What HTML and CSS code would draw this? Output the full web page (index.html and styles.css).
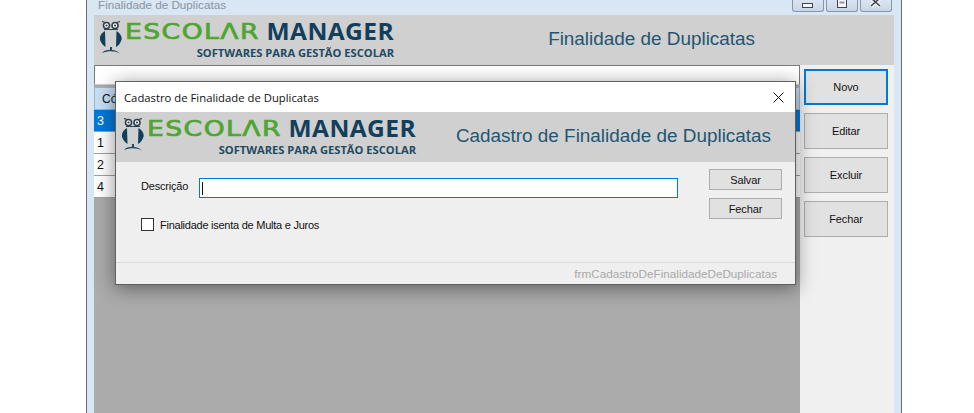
FILE: index.html
```html
<!DOCTYPE html>
<html lang="pt">
<head>
<meta charset="utf-8">
<title>Finalidade de Duplicatas</title>
<link rel="stylesheet" href="styles.css">
</head>
<body>
<div class="window">
  <div class="titlebar">
    <span class="window-title">Finalidade de Duplicatas</span>
    <div class="controls">
      <span class="ctl"><svg width="32" height="12" viewBox="0 0 32 12"><rect x="10.5" y="3.5" width="10" height="4" fill="#f4f6f9" stroke="#3c4654"/></svg></span>
      <span class="ctl"><svg width="32" height="12" viewBox="0 0 32 12"><rect x="11.5" y="-2.5" width="9" height="10" fill="#f4f6f9" stroke="#3c4654"/><rect x="13.5" y="1.5" width="5" height="2" fill="#8d98a8"/></svg></span>
      <span class="ctl"><svg width="32" height="12" viewBox="0 0 32 12"><path d="M11 -2 L20 6 M20 -2 L11 6" stroke="#f4f6f9" stroke-width="4"/><path d="M11 -2 L20 6 M20 -2 L11 6" stroke="#3c4654" stroke-width="1.6"/></svg></span>
    </div>
  </div>
  <div class="client">
    <header class="band">
      <div class="logo">
        <svg class="owl" width="22" height="34" viewBox="0 0 22 34">
          <circle cx="6.5" cy="4.5" r="3" fill="#fff" stroke="#2b3f4c" stroke-width="1.6"/>
          <circle cx="15" cy="4.5" r="3" fill="#fff" stroke="#2b3f4c" stroke-width="1.6"/>
          <circle cx="6.5" cy="4.5" r="1.1" fill="#2b3f4c"/>
          <circle cx="15" cy="4.5" r="1.1" fill="#2b3f4c"/>
          <path d="M2 .5 L5 1.5 M20 .5 L17 1.5 M4 8.5 H18" stroke="#2b3f4c" stroke-width="1.2"/>
          <path d="M5 10 C1 12 -1.5 17 0.5 20 C1.5 23 4 25 5.5 26 Z" fill="#103f5c"/>
          <path d="M16.5 10 C20.5 12 23 17 21 20 C20 23 18 25 16 26 Z" fill="#103f5c"/>
          <path d="M2 32 C5 27.5 16 27.5 20 32.5 C15 29.5 8 29.5 2 32 Z" fill="#1d4a63"/>
          <path d="M10 26 H12 V29 H10 Z" fill="#1d4a63"/>
        </svg>
        <div class="wordmark">
          <div class="brand"><span class="brand-green">ESCOLΛR</span><span class="brand-blue">MANAGER</span></div>
          <div class="tagline">SOFTWARES PARA GESTÃO ESCOLAR</div>
        </div>
      </div>
      <h1 class="band-title main-title">Finalidade de Duplicatas</h1>
    </header>
    <div class="content">
      <div class="left">
        <div class="search"></div>
        <div class="grid">
          <div class="grid-head">Có</div>
          <div class="row selected">3</div>
          <div class="row">1</div>
          <div class="row">2</div>
          <div class="row">4</div>
        </div>
      </div>
      <aside class="actions">
        <button class="btn btn-action btn-focus">Novo</button>
        <button class="btn btn-action">Editar</button>
        <button class="btn btn-action">Excluir</button>
        <button class="btn btn-action">Fechar</button>
      </aside>
    </div>
  </div>
</div>

<section class="dialog">
  <div class="dialog-title">
    <span>Cadastro de Finalidade de Duplicatas</span>
    <svg width="11" height="11" viewBox="0 0 11 11"><path d="M0.5 0.5 L10.5 10.5 M10.5 0.5 L0.5 10.5" stroke="#111" stroke-width="1"/></svg>
  </div>
  <header class="band dialog-band">
    <div class="logo">
      <svg class="owl" width="22" height="34" viewBox="0 0 22 34">
        <circle cx="6.5" cy="4.5" r="3" fill="#fff" stroke="#2b3f4c" stroke-width="1.6"/>
        <circle cx="15" cy="4.5" r="3" fill="#fff" stroke="#2b3f4c" stroke-width="1.6"/>
        <circle cx="6.5" cy="4.5" r="1.1" fill="#2b3f4c"/>
        <circle cx="15" cy="4.5" r="1.1" fill="#2b3f4c"/>
        <path d="M2 .5 L5 1.5 M20 .5 L17 1.5 M4 8.5 H18" stroke="#2b3f4c" stroke-width="1.2"/>
        <path d="M5 10 C1 12 -1.5 17 0.5 20 C1.5 23 4 25 5.5 26 Z" fill="#103f5c"/>
        <path d="M16.5 10 C20.5 12 23 17 21 20 C20 23 18 25 16 26 Z" fill="#103f5c"/>
        <path d="M2 32 C5 27.5 16 27.5 20 32.5 C15 29.5 8 29.5 2 32 Z" fill="#1d4a63"/>
        <path d="M10 26 H12 V29 H10 Z" fill="#1d4a63"/>
      </svg>
      <div class="wordmark">
        <div class="brand"><span class="brand-green">ESCOLΛR</span><span class="brand-blue">MANAGER</span></div>
        <div class="tagline">SOFTWARES PARA GESTÃO ESCOLAR</div>
      </div>
    </div>
    <h2 class="band-title dialog-heading">Cadastro de Finalidade de Duplicatas</h2>
  </header>
  <div class="form">
    <div class="fields">
      <div class="field">
        <label class="label">Descrição</label>
        <div class="input"><span class="caret"></span></div>
      </div>
      <label class="check"><span class="box"></span><span>Finalidade isenta de Multa e Juros</span></label>
    </div>
    <div class="form-buttons">
      <button class="btn btn-small">Salvar</button>
      <button class="btn btn-small">Fechar</button>
    </div>
  </div>
  <footer class="dialog-foot">frmCadastroDeFinalidadeDeDuplicatas</footer>
</section>
</body>
</html>
```

FILE: styles.css
```css
* { box-sizing: border-box; }
html, body { margin: 0; height: 413px; overflow: hidden; background: #fff; }
body { position: relative; font-family: "Liberation Sans", Arial, sans-serif; color: #111; }

.window {
  width: 816px; height: 413px; margin-left: 86px;
  border-left: 1px solid #6d6d6d; border-right: 1px solid #6d6d6d;
  background: #d9e6f4; padding: 0 7px;
  display: flex; flex-direction: column;
}
.titlebar { height: 15px; flex: none; display: flex; justify-content: space-between; }
.window-title { font-size: 11.7px; line-height: 15px; color: #8b949e; margin: -3px 0 0 4px; height: 18px; }
.controls { display: flex; gap: 2px; height: 12px; margin-right: 2px; }
.ctl {
  width: 32px; height: 12px; display: block;
  border: 1px solid #8795ad; border-top: 0; border-radius: 0 0 3px 3px;
  background: linear-gradient(#dbe4f0, #c9d6e8);
}
.ctl svg { display: block; margin: 0 -1px; }

.client { flex: 1; display: flex; flex-direction: column; background: #f0f0f0; min-height: 0; }

.band {
  height: 50px; flex: none; background: #d0d0d0;
  display: flex; justify-content: space-between;
}
.logo { display: flex; padding: 6px 0 0 6px; height: 50px; }
.owl { display: block; flex: none; }
.wordmark { margin-left: 3px; width: 269px; }
.brand { display: flex; justify-content: space-between; height: 21px; line-height: 21px; white-space: nowrap; }
.brand-green {
  display: inline-block; transform: scaleX(1.21); transform-origin: left center;
  font-family: "DejaVu Sans", sans-serif; font-size: 22px; font-weight: 400;
  color: #4ea52f; letter-spacing: 1.2px; -webkit-text-stroke: 0.7px #4ea52f;
}
.brand-blue {
  display: inline-block; transform: scaleX(1.09); transform-origin: right center;
  font-family: "Open Sans", sans-serif; font-size: 22.5px; font-weight: 700;
  color: #123f5c; letter-spacing: 0.4px;
}
.tagline {
  margin-top: 4px; text-align: right; font-family: "Open Sans", sans-serif;
  font-size: 11.15px; font-weight: 700; color: #1d4a63; line-height: 14px; white-space: nowrap;
}
.band-title { margin: 0; font-weight: 400; color: #1f5672; font-size: 18.9px; line-height: 48px; }
.main-title { margin-right: 139px; }
.dialog-heading { margin-right: 24px; }

.content { flex: 1; display: flex; min-height: 0; }
.left { width: 706px; flex: none; background: #ababab; }
.search { height: 20px; background: #fff; border: 1px solid #7a7a7a; border-bottom-color: #ccc; }
.grid { margin-top: 2px; font-size: 12px; }
.grid-head { height: 23px; line-height: 23px; padding-left: 7px; background: #c7dff5; border: 1px solid #9fb4c8; }
.row { height: 22px; line-height: 23px; padding-left: 3px; background: #fff; border-bottom: 1px solid #a0a0a0; font-size: 12.5px; }
.row.selected { background: #0078d7; color: #fff; }

.actions { flex: 1; padding: 4px 0 0 4px; display: flex; flex-direction: column; gap: 8px; }
.btn {
  font-family: "Liberation Sans", Arial, sans-serif; color: #111;
  background: #e1e1e1; border: 1px solid #adadad; padding: 0;
  font-size: 11px; letter-spacing: -0.1px; display: block;
}
.btn-action { width: 84px; height: 36px; }
.btn-focus { border: 2px solid #0078d7; }
.btn-small { width: 73px; height: 21px; }

.dialog {
  position: absolute; left: 115px; top: 81px; width: 681px; height: 204px;
  background: #efefef; border: 1px solid #5f5f5f;
  box-shadow: 0 3px 18px rgba(0,0,0,.45);
  display: flex; flex-direction: column;
}
.dialog-title {
  height: 30px; flex: none; background: #fff; display: flex; align-items: center;
  justify-content: space-between; padding: 0 11px 0 8px;
  font-family: "Open Sans", sans-serif; font-size: 11.3px; color: #111;
}
.form { flex: 1; display: flex; justify-content: space-between; padding: 7px 13px 0 25px; }
.fields { display: flex; flex-direction: column; }
.field { display: flex; align-items: center; gap: 10px; margin-top: 9px; }
.label { font-size: 11px; letter-spacing: -0.2px; width: 48px; margin-top: -5px; }
.input { width: 479px; height: 20px; background: #fff; border: 1px solid #0078d7; padding: 3px 2px; }
.caret { display: block; width: 1px; height: 13px; background: #111; }
.check { display: flex; align-items: center; gap: 6px; font-size: 11px; letter-spacing: -0.25px; margin-top: 20px; }
.box { width: 13px; height: 13px; background: #fff; border: 1px solid #333; }
.form-buttons { display: flex; flex-direction: column; gap: 8px; }
.dialog-foot {
  height: 22px; flex: none; border-top: 1px solid #dcdcdc; text-align: right;
  padding-right: 18px; font-size: 11.7px; line-height: 22px; color: #a9a9a9;
}
```
